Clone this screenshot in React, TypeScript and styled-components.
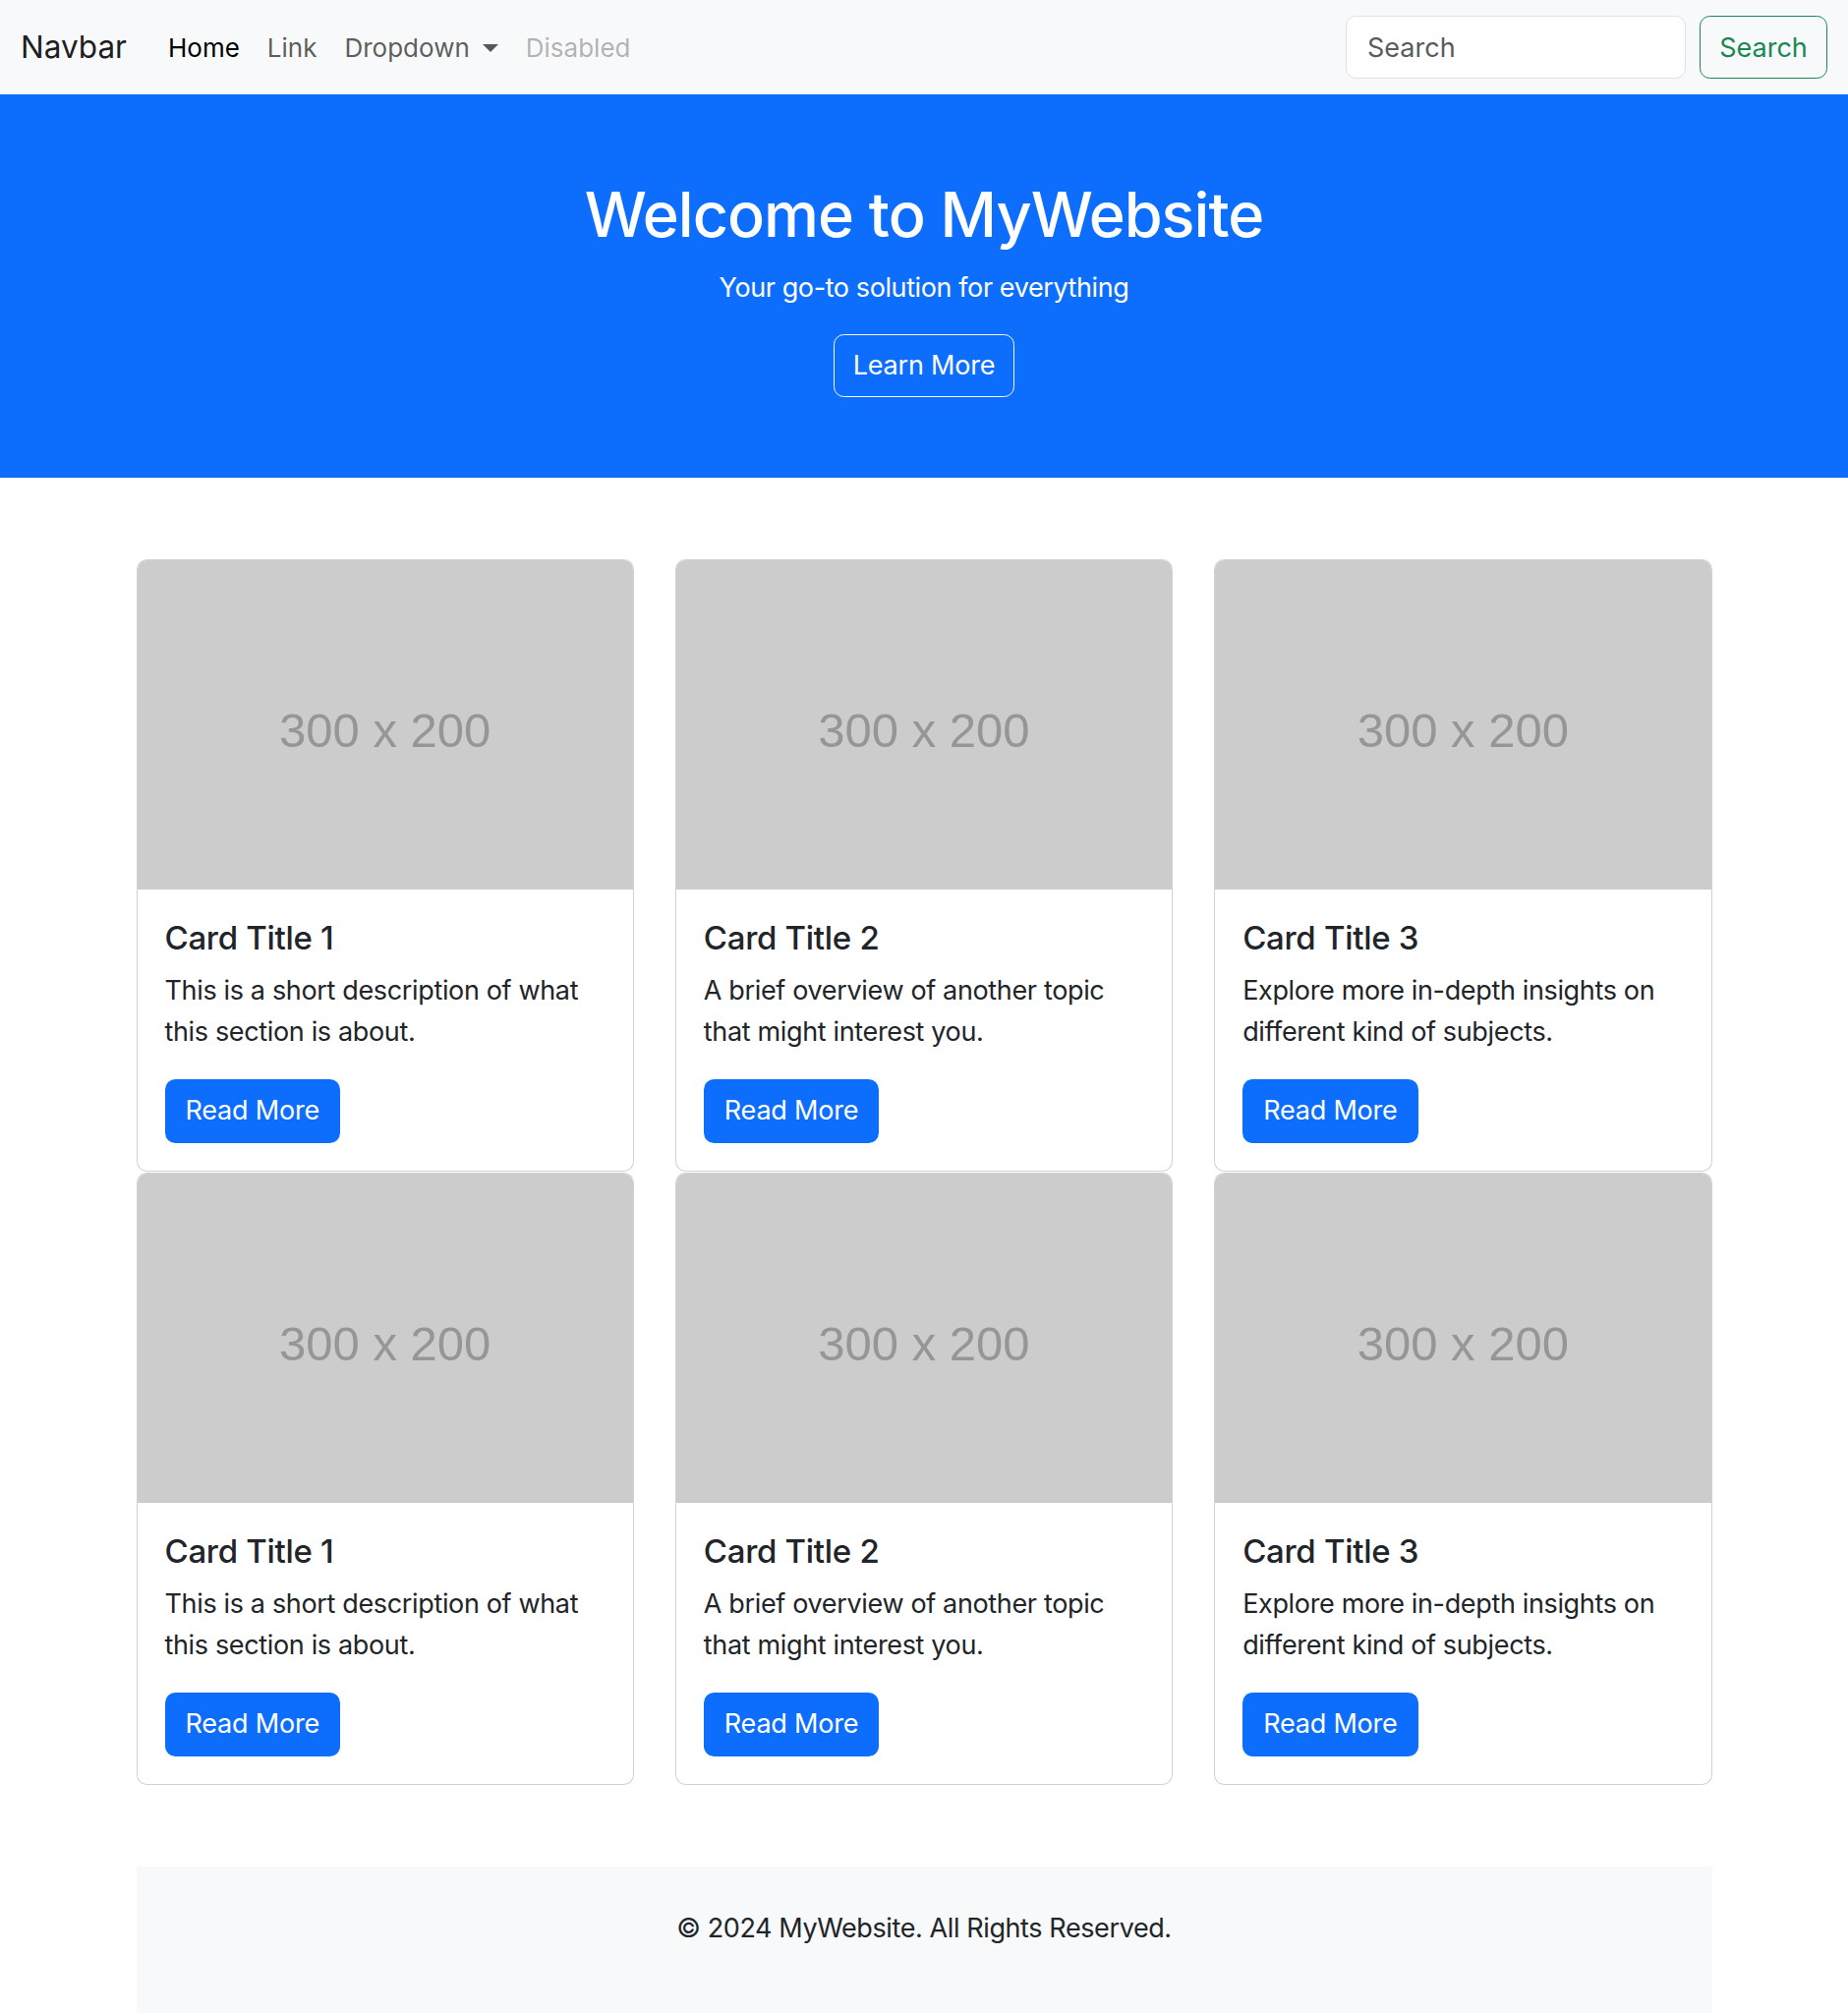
import React from "react";
import styled, { createGlobalStyle } from "styled-components";

const GlobalStyle = createGlobalStyle`
  html, body {
    margin: 0;
    padding: 0;
    background: #ffffff;
    color: #212529;
    font-family: Inter, "Noto Sans", Roboto, sans-serif;
    font-size: 28px;
    line-height: 1.5;
    -webkit-font-smoothing: antialiased;
  }
  * { box-sizing: border-box; }
`;

const NavBar = styled.nav`
  height: 96px;
  background: #f8f9fa;
  display: flex;
  align-items: center;
  justify-content: space-between;
  padding: 0 21px;
`;

const NavLeft = styled.div`
  display: flex;
  align-items: center;
`;

const Brand = styled.a`
  font-size: 31.5px;
  line-height: 1.5;
  color: rgba(0, 0, 0, 0.9);
  text-decoration: none;
  margin-right: 28px;
`;

const NavList = styled.ul`
  list-style: none;
  display: flex;
  align-items: center;
  margin: 0;
  padding: 0;
`;

const NavLink = styled.a<{ $tone: "active" | "normal" | "disabled" }>`
  display: inline-flex;
  align-items: center;
  padding: 14px 14px;
  font-size: 26px;
  line-height: 1.5;
  text-decoration: none;
  color: ${(p) =>
    p.$tone === "active"
      ? "rgba(0,0,0,1)"
      : p.$tone === "disabled"
      ? "rgba(0,0,0,0.3)"
      : "rgba(0,0,0,0.65)"};
`;

const Caret = styled.span`
  display: inline-block;
  margin-left: 13px;
  width: 0;
  height: 0;
  border-top: 8px solid rgba(0, 0, 0, 0.65);
  border-left: 8px solid transparent;
  border-right: 8px solid transparent;
  margin-top: 2px;
`;

const SearchForm = styled.form`
  display: flex;
  align-items: center;
  gap: 14px;
`;

const SearchInput = styled.input`
  width: 346px;
  height: 64px;
  padding: 0 21px;
  font-family: inherit;
  font-size: 27px;
  color: #212529;
  background: #fff;
  border: 1.75px solid #dee2e6;
  border-radius: 10.5px;
  outline: none;
  &::placeholder {
    color: #595c5f;
  }
`;

const OutlineSuccess = styled.button`
  height: 64px;
  width: 130px;
  font-family: inherit;
  font-size: 27px;
  color: #198754;
  background: transparent;
  border: 1.75px solid #198754;
  border-radius: 10.5px;
  padding: 0;
`;

const Hero = styled.header`
  background: #0d6efd;
  color: #fff;
  text-align: center;
  padding: 80px 0 82px;
  display: flex;
  flex-direction: column;
  align-items: center;
`;

const HeroTitle = styled.h1`
  margin: 0;
  font-size: 63px;
  line-height: 84px;
  font-weight: 500;
  letter-spacing: -1px;
`;

const HeroText = styled.p`
  margin: 12px 0 26px;
  font-size: 27px;
  line-height: 42px;
  letter-spacing: -0.4px;
`;

const OutlineLight = styled.a`
  display: inline-flex;
  align-items: center;
  justify-content: center;
  width: 184px;
  height: 64px;
  border: 1.75px solid #f8f9fa;
  border-radius: 10.5px;
  color: #fff;
  font-size: 27px;
  letter-spacing: -0.2px;
  text-decoration: none;
`;

const Main = styled.main`
  width: 1603px;
  margin: 83px auto 0;
`;

const CardGrid = styled.div`
  display: grid;
  grid-template-columns: repeat(3, 1fr);
  column-gap: 42px;
  row-gap: 1px;
`;

const Card = styled.div`
  border: 1.75px solid rgba(0, 0, 0, 0.175);
  border-radius: 10.5px;
  background: #fff;
  overflow: hidden;
  display: flex;
  flex-direction: column;
`;

const Placeholder = styled.div`
  height: 335px;
  background: #cccccc;
  display: flex;
  align-items: center;
  justify-content: center;
  font-family: "Liberation Sans", Arial, sans-serif;
  font-size: 49px;
  color: #969696;
  padding-top: 13px;
`;

const CardBody = styled.div`
  padding: 28px 28px 28px;
`;

const CardTitle = styled.h5`
  margin: 0 0 12px;
  font-size: 33px;
  line-height: 42px;
  font-weight: 500;
  letter-spacing: -0.3px;
  color: #212529;
`;

const CardText = styled.p`
  margin: 0 0 27px;
  font-size: 27px;
  line-height: 42px;
  letter-spacing: -0.35px;
  color: #212529;
`;

const PrimaryButton = styled.a`
  display: inline-flex;
  align-items: center;
  justify-content: center;
  height: 65px;
  padding: 0 21px;
  background: #0d6efd;
  color: #fff;
  border-radius: 10.5px;
  font-size: 27px;
  letter-spacing: -0.2px;
  text-decoration: none;
`;

const Footer = styled.footer`
  width: 1603px;
  margin: 83px auto 0;
  background: #f8f9fa;
  padding: 42px 0;
  text-align: center;
`;

const FooterText = styled.p`
  margin: 0 0 28px;
  font-size: 27px;
  line-height: 42px;
  letter-spacing: -0.4px;
  color: #212529;
`;

const cards = [
  { title: "Card Title 1", text: "This is a short description of what this section is about." },
  { title: "Card Title 2", text: "A brief overview of another topic that might interest you." },
  { title: "Card Title 3", text: "Explore more in-depth insights on different kind of subjects." },
];

export default function App() {
  const all = [...cards, ...cards];
  return (
    <>
      <GlobalStyle />
      <NavBar>
        <NavLeft>
          <Brand href="#">Navbar</Brand>
          <NavList>
            <li><NavLink $tone="active" href="#">Home</NavLink></li>
            <li><NavLink $tone="normal" href="#">Link</NavLink></li>
            <li>
              <NavLink $tone="normal" href="#">
                Dropdown
                <Caret />
              </NavLink>
            </li>
            <li><NavLink $tone="disabled">Disabled</NavLink></li>
          </NavList>
        </NavLeft>
        <SearchForm onSubmit={(e) => e.preventDefault()}>
          <SearchInput type="search" placeholder="Search" />
          <OutlineSuccess type="submit">Search</OutlineSuccess>
        </SearchForm>
      </NavBar>

      <Hero>
        <HeroTitle>Welcome to MyWebsite</HeroTitle>
        <HeroText>Your go-to solution for everything</HeroText>
        <OutlineLight href="#">Learn More</OutlineLight>
      </Hero>

      <Main>
        <CardGrid>
          {all.map((c, i) => (
            <Card key={i}>
              <Placeholder>300 x 200</Placeholder>
              <CardBody>
                <CardTitle>{c.title}</CardTitle>
                <CardText>{c.text}</CardText>
                <PrimaryButton href="#">Read More</PrimaryButton>
              </CardBody>
            </Card>
          ))}
        </CardGrid>
      </Main>

      <Footer>
        <FooterText>© 2024 MyWebsite. All Rights Reserved.</FooterText>
      </Footer>
    </>
  );
}
